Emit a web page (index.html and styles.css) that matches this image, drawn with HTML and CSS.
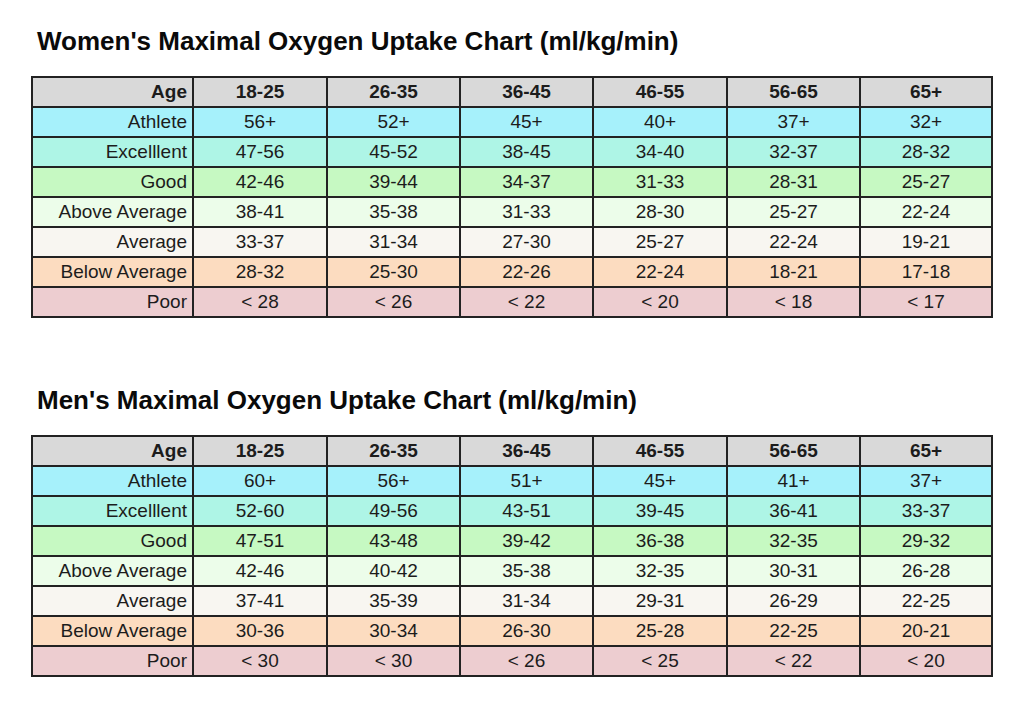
FILE: index.html
```html
<!DOCTYPE html>
<html>
<head>
<meta charset="utf-8">
<link rel="stylesheet" href="styles.css">
</head>
<body>
<div class="page">
  <section class="chart">
    <h1 class="title">Women's Maximal Oxygen Uptake Chart (ml/kg/min)</h1>
    <div class="table">
      <div class="row head"><div>Age</div><div>18-25</div><div>26-35</div><div>36-45</div><div>46-55</div><div>56-65</div><div>65+</div></div>
      <div class="row athlete"><div>Athlete</div><div>56+</div><div>52+</div><div>45+</div><div>40+</div><div>37+</div><div>32+</div></div>
      <div class="row excellent"><div>Excelllent</div><div>47-56</div><div>45-52</div><div>38-45</div><div>34-40</div><div>32-37</div><div>28-32</div></div>
      <div class="row good"><div>Good</div><div>42-46</div><div>39-44</div><div>34-37</div><div>31-33</div><div>28-31</div><div>25-27</div></div>
      <div class="row above"><div>Above Average</div><div>38-41</div><div>35-38</div><div>31-33</div><div>28-30</div><div>25-27</div><div>22-24</div></div>
      <div class="row average"><div>Average</div><div>33-37</div><div>31-34</div><div>27-30</div><div>25-27</div><div>22-24</div><div>19-21</div></div>
      <div class="row below"><div>Below Average</div><div>28-32</div><div>25-30</div><div>22-26</div><div>22-24</div><div>18-21</div><div>17-18</div></div>
      <div class="row poor"><div>Poor</div><div>&lt; 28</div><div>&lt; 26</div><div>&lt; 22</div><div>&lt; 20</div><div>&lt; 18</div><div>&lt; 17</div></div>
    </div>
  </section>
  <section class="chart second">
    <h1 class="title">Men's Maximal Oxygen Uptake Chart (ml/kg/min)</h1>
    <div class="table">
      <div class="row head"><div>Age</div><div>18-25</div><div>26-35</div><div>36-45</div><div>46-55</div><div>56-65</div><div>65+</div></div>
      <div class="row athlete"><div>Athlete</div><div>60+</div><div>56+</div><div>51+</div><div>45+</div><div>41+</div><div>37+</div></div>
      <div class="row excellent"><div>Excelllent</div><div>52-60</div><div>49-56</div><div>43-51</div><div>39-45</div><div>36-41</div><div>33-37</div></div>
      <div class="row good"><div>Good</div><div>47-51</div><div>43-48</div><div>39-42</div><div>36-38</div><div>32-35</div><div>29-32</div></div>
      <div class="row above"><div>Above Average</div><div>42-46</div><div>40-42</div><div>35-38</div><div>32-35</div><div>30-31</div><div>26-28</div></div>
      <div class="row average"><div>Average</div><div>37-41</div><div>35-39</div><div>31-34</div><div>29-31</div><div>26-29</div><div>22-25</div></div>
      <div class="row below"><div>Below Average</div><div>30-36</div><div>30-34</div><div>26-30</div><div>25-28</div><div>22-25</div><div>20-21</div></div>
      <div class="row poor"><div>Poor</div><div>&lt; 30</div><div>&lt; 30</div><div>&lt; 26</div><div>&lt; 25</div><div>&lt; 22</div><div>&lt; 20</div></div>
    </div>
  </section>
</div>
</body>
</html>
```

FILE: styles.css
```css
html, body {
  margin: 0;
  padding: 0;
  background: #ffffff;
}

body {
  font-family: "Liberation Sans", Arial, sans-serif;
  color: #1c1c1c;
}

.page {
  padding: 26px 0 0 31px;
}

.chart.second {
  margin-top: 67px;
}

.title {
  margin: 0 0 20px 6px;
  font-size: 26px;
  line-height: 30px;
  font-weight: bold;
  color: #0a0a0a;
}

.table {
  width: 962px;
  display: flex;
  flex-direction: column;
  gap: 2px;
  padding: 2px;
  box-sizing: border-box;
  background: #222222;
}

.row {
  display: grid;
  grid-template-columns: 159px 132px 131px 131px 132px 131px 1fr;
  gap: 2px;
}

.row > div {
  height: 28px;
  line-height: 28px;
  font-size: 19px;
  text-align: center;
}

.row > div:first-child {
  text-align: right;
  padding-right: 5px;
}

.head > div {
  font-weight: bold;
  background: #d9d9d9;
}

.athlete > div { background: #a6f1fb; }
.excellent > div { background: #aef5e6; }
.good > div { background: #c6f9c2; }
.above > div { background: #ecfdea; }
.average > div { background: #f8f6f1; }
.below > div { background: #fcdcc0; }
.poor > div { background: #edcdd0; }
```
